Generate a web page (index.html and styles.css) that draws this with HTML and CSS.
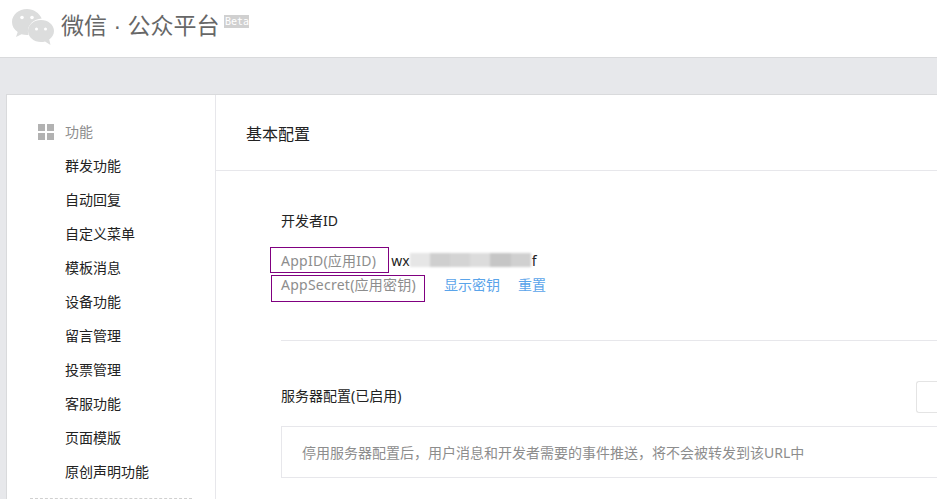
FILE: index.html
```html
<!DOCTYPE html>
<html lang="zh">
<head>
<meta charset="utf-8">
<title>微信公众平台</title>
<link rel="stylesheet" href="styles.css">
</head>
<body>
<header class="top">
  <svg class="logo" width="44" height="36" viewBox="0 0 44 36">
    <path fill="#dcdddd" d="M16 0C7.700 0 1 5.800 1 13c0 4.100 2.200 7.700 5.700 10L5 28l5.500-2.700c1.700.5 3.500.8 5.500.8.500 0 1 0 1.500-.1-.4-1.200-.6-2.400-.6-3.700 0-6.800 5.900-12.300 13.800-12.800C28.300 4 22.500 0 16 0z"/>
    <path fill="#dcdddd" d="M43 22c0-6.100-5.900-11-13-11S17 15.900 17 22s5.900 11 13 11c1.400 0 2.800-.2 4-.6L39.500 36l-1.300-5.500C41.100 28.500 43 25.400 43 22z"/>
    <circle cx="11" cy="8.500" r="1.800" fill="#fff"/><circle cx="21" cy="8.500" r="1.800" fill="#fff"/>
    <circle cx="25.500" cy="20" r="1.500" fill="#fff"/><circle cx="34.500" cy="20" r="1.500" fill="#fff"/>
  </svg>
  <span class="brand">微信 · 公众平台</span>
  <span class="beta">Beta</span>
</header>
<div class="band"></div>
<main class="card">
  <nav class="side">
    <div class="group">
      <svg class="grid-icon" width="16" height="16" viewBox="0 0 16 16">
        <rect width="7" height="7" fill="#b2b2b2"/><rect x="9" width="7" height="7" fill="#b2b2b2"/>
        <rect y="9" width="7" height="7" fill="#b2b2b2"/><rect x="9" y="9" width="7" height="7" fill="#b2b2b2"/>
      </svg>
      <span>功能</span>
    </div>
    <a class="item">群发功能</a>
    <a class="item">自动回复</a>
    <a class="item">自定义菜单</a>
    <a class="item">模板消息</a>
    <a class="item">设备功能</a>
    <a class="item">留言管理</a>
    <a class="item">投票管理</a>
    <a class="item">客服功能</a>
    <a class="item">页面模版</a>
    <a class="item">原创声明功能</a>
    <div class="dash"></div>
  </nav>
  <section class="content">
    <h2 class="title">基本配置</h2>
    <div class="body">
      <h3 class="sub">开发者ID</h3>
      <div class="row row-id">
        <span class="label">AppID(应用ID)</span>
        <span class="value">wx<span class="blur"><i class="b1"></i><i class="b2"></i><i class="b3"></i><i class="b4"></i><i class="b5"></i><i class="b6"></i></span>f</span>
        <span class="mark mark-id"></span>
      </div>
      <div class="row row-secret">
        <span class="label">AppSecret(应用密钥)</span>
        <a class="link first">显示密钥</a>
        <a class="link">重置</a>
        <span class="mark mark-secret"></span>
      </div>
      <hr class="rule">
      <div class="server">
        <h3 class="sub server-title">服务器配置(已启用)</h3>
        <span class="btn"></span>
      </div>
      <p class="note">停用服务器配置后，用户消息和开发者需要的事件推送，将不会被转发到该URL中</p>
    </div>
  </section>
</main>
</body>
</html>
```
FILE: styles.css
```css
* { box-sizing: border-box; }
html, body { margin: 0; height: 499px; overflow: hidden; }
body {
  width: 937px;
  background: #e7e8eb;
  font-family: "Noto Sans", "Noto Sans CJK TC", sans-serif;
  font-size: 14px;
  color: #222;
}
.top {
  height: 58px;
  background: #fff;
  border-bottom: 1px solid #d9dadc;
  display: flex;
  align-items: flex-start;
  padding: 9px 0 0 11px;
}
.logo { flex: none; }
.brand {
  margin: 2px 0 0 6px;
  font-family: "Liberation Sans", "Noto Sans CJK SC", sans-serif;
  font-size: 23px;
  line-height: 30px;
  color: #676767;
}
.beta {
  margin: 6px 0 0 5px;
  width: 25px;
  height: 13px;
  background: #d0d0d0;
  color: #fff;
  font: 10px/13px "DejaVu Sans Mono", monospace;
  text-align: center;
}
.band { height: 36px; }
.card {
  margin-left: 6px;
  width: 931px;
  height: 420px;
  background: #fff;
  border: 1px solid #d9dadc;
  border-right: 0;
  display: flex;
}
.side {
  flex: none;
  width: 209px;
  border-right: 1px solid #e7e7eb;
  padding-top: 19px;
}
.group {
  height: 35px;
  display: flex;
  align-items: center;
  padding-left: 31px;
  color: #8d8d8d;
}
.group span { margin: 0 0 2px 11px; }
.grid-icon { flex: none; }
.item {
  display: block;
  height: 34px;
  line-height: 34px;
  padding-left: 58px;
}
.dash {
  margin: 9px 0 0 23px;
  width: 162px;
  border-top: 1px dashed #d0d0d0;
}
.content { flex: 1; min-width: 0; }
.title {
  margin: 0;
  height: 76px;
  line-height: 78px;
  padding-left: 30px;
  font-size: 16px;
  font-weight: 400;
  color: #222;
  border-bottom: 1px solid #e7e7eb;
}
.body { padding: 37px 0 0 65px; }
.sub { margin: 0; font-size: 14px; font-weight: 400; line-height: 26px; color: #222; }
.server-title { margin-bottom: 2px; }
.row { position: relative; display: flex; align-items: center; height: 24px; }
.row-id { margin-top: 14px; }
.label { color: #8d8d8d; letter-spacing: .25px; }
.value { margin-left: 15px; display: flex; align-items: center; color: #222; }
.blur { display: flex; width: 121px; height: 14px; margin: 0 1px 0 0; filter: blur(1px); }
.blur i { flex: 1; }
.b1 { background: #e6e6e6; }
.b2 { background: #cfcfcf; }
.b3 { background: #d4d4d4; }
.b4 { background: #dcdcdc; }
.b5 { background: #c6c6c6; }
.b6 { background: #d0d0d0; }
.link { color: #5aa4ea; }
.first { margin: 0 18px 0 28px; }
.mark { position: absolute; border: 1px solid #800080; }
.mark-id { left: -11px; top: -1px; width: 119px; height: 26px; }
.mark-secret { left: -10px; top: 3px; width: 154px; height: 27px; }
.rule {
  margin: 44px 0 0;
  border: 0;
  border-top: 1px solid #e7e7eb;
}
.server { display: flex; align-items: center; justify-content: space-between; height: 32px; margin-top: 40px; }
.btn {
  flex: none;
  width: 21px;
  height: 32px;
  background: #fff;
  border: 1px solid #e4e4e4;
  border-right: 0;
  border-radius: 3px 0 0 3px;
}
.note {
  margin: 13px 0 0;
  height: 52px;
  line-height: 52px;
  padding-left: 20px;
  border: 1px solid #e7e7eb;
  border-right: 0;
  color: #8d8d8d;
}
```
